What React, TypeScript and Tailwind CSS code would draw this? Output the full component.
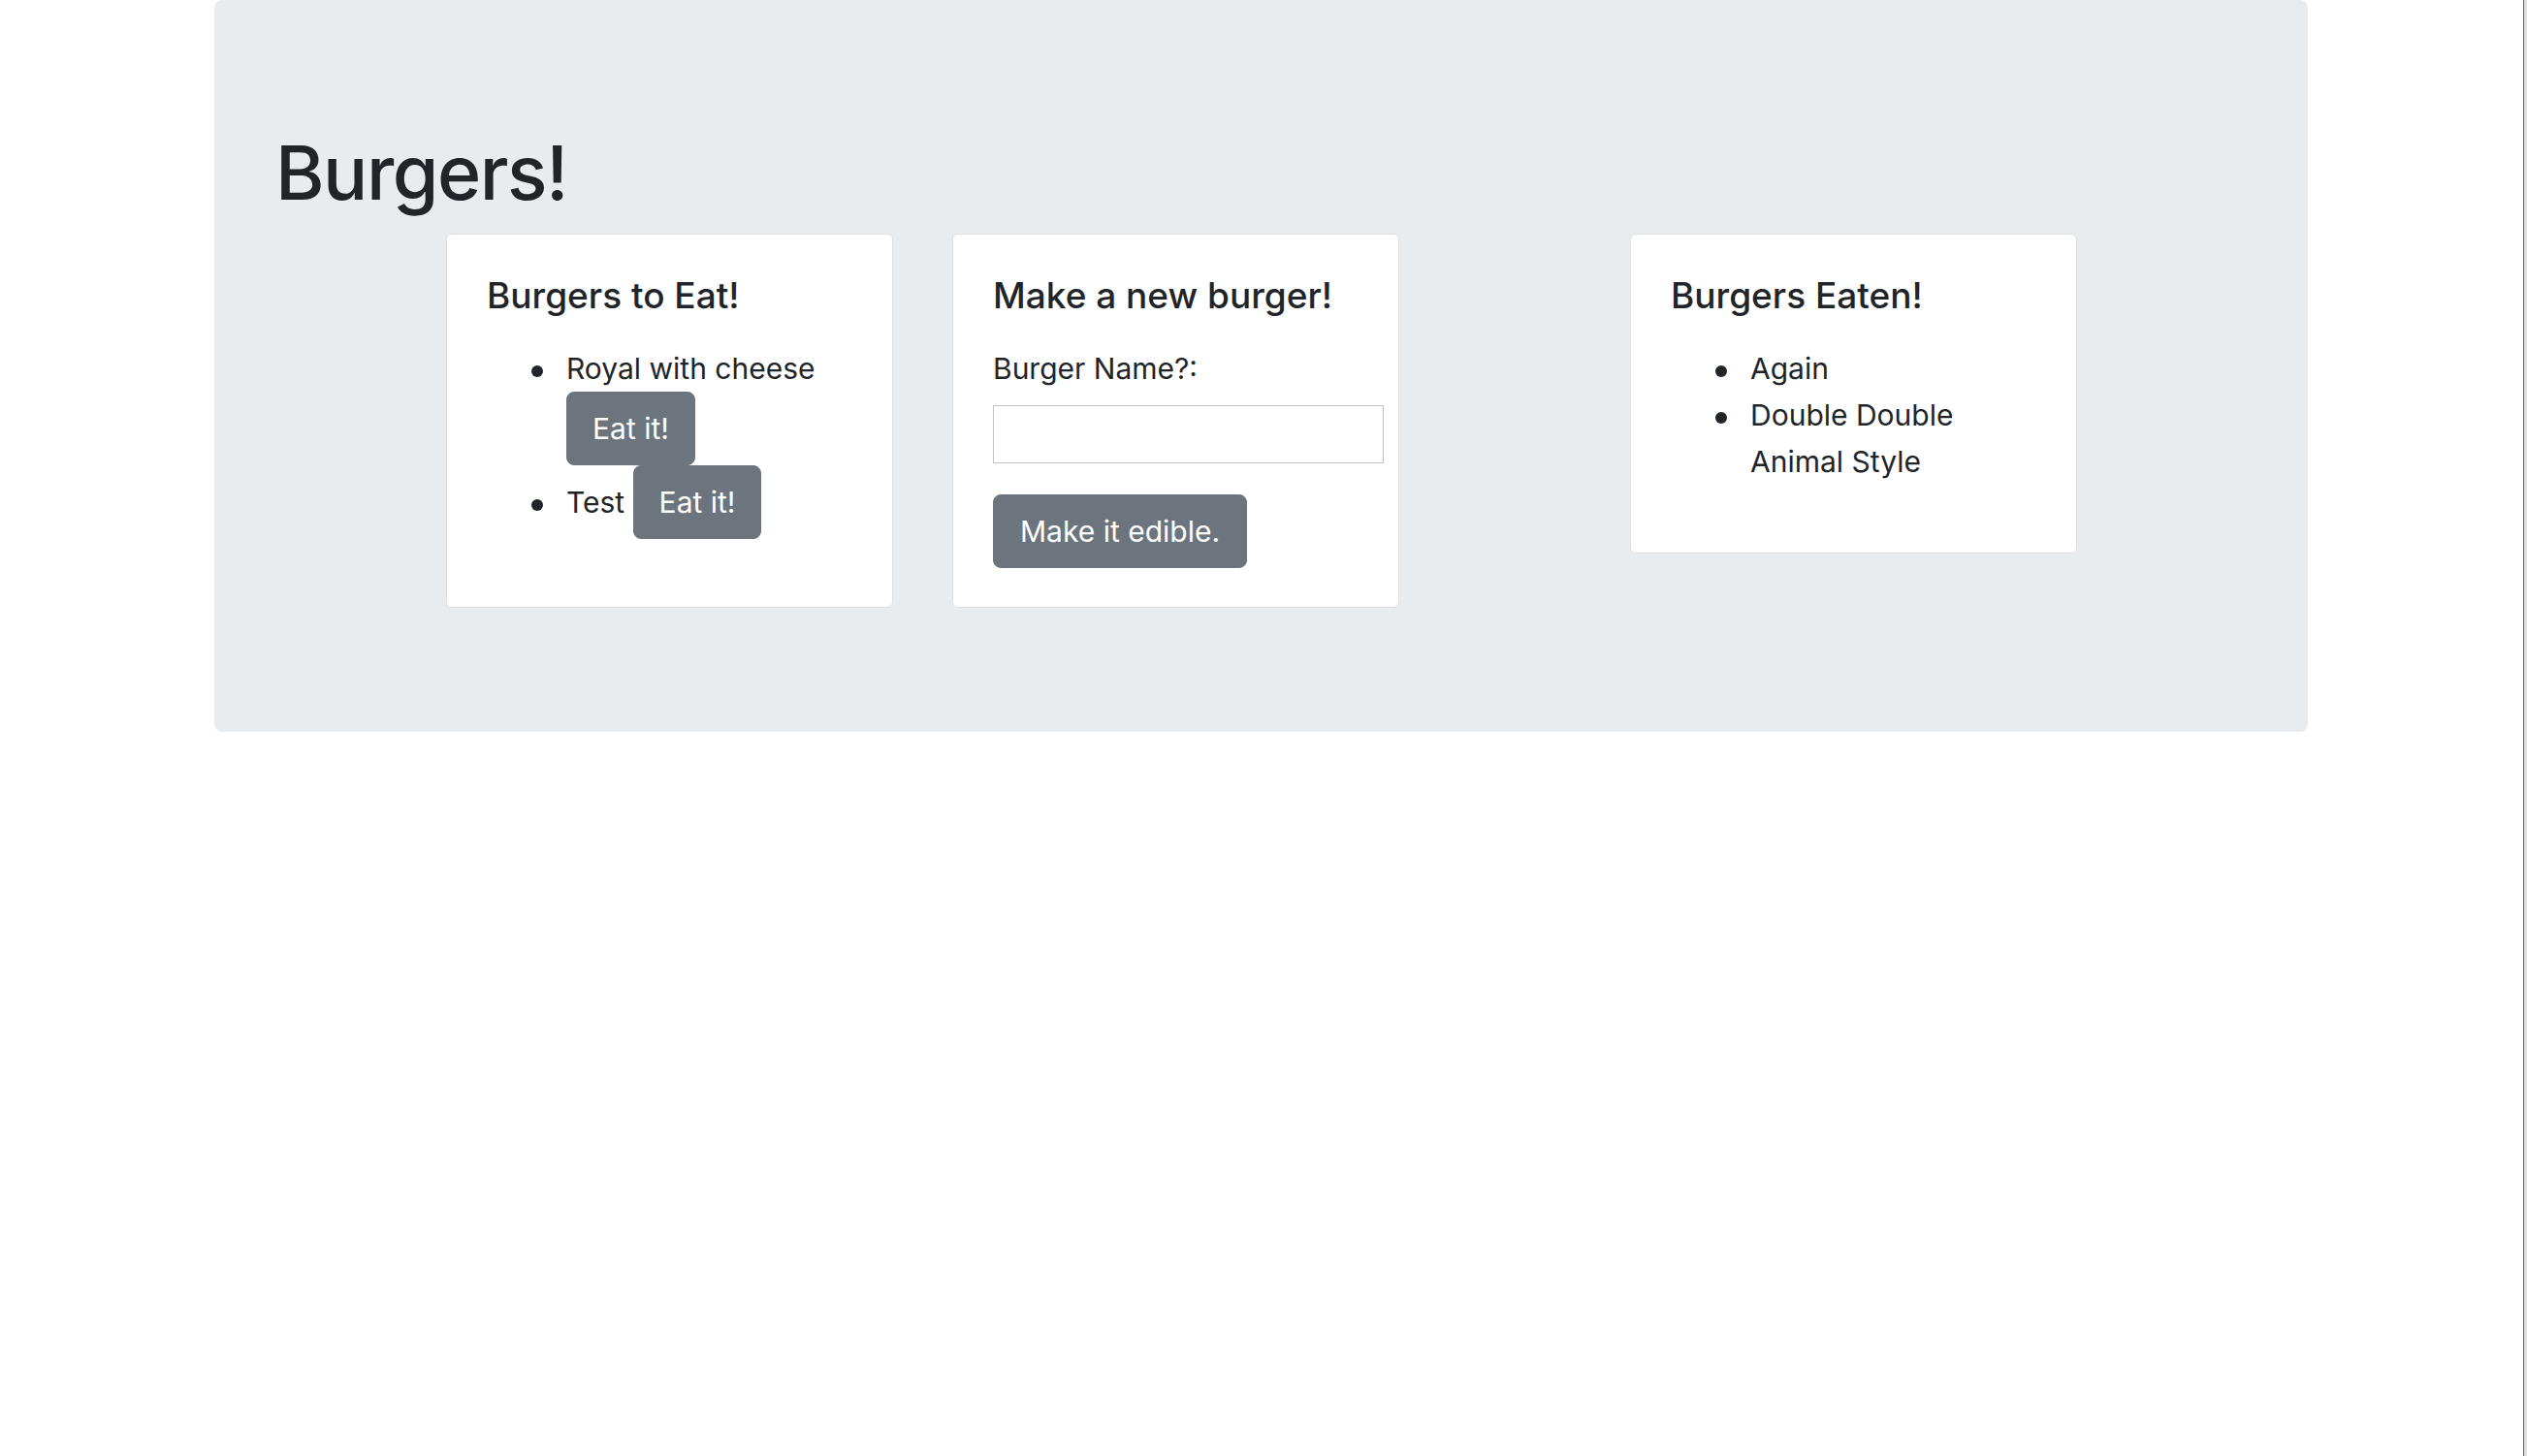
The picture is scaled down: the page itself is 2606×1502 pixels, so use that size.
import { useState } from 'react'

interface Burger {
  id: number
  name: string
  devoured: boolean
}

const initialBurgers: Burger[] = [
  { id: 1, name: 'Royal with cheese', devoured: false },
  { id: 2, name: 'Test', devoured: false },
  { id: 3, name: 'Again', devoured: true },
  { id: 4, name: 'Double Double Animal Style', devoured: true },
]

function Card({ title, children }: { title: string; children: React.ReactNode }) {
  return (
    <div className="w-[461px] shrink-0 bg-white border border-[#dfdfdf] rounded-[6px] px-[41px] pt-[40px] pb-[40px]">
      <h4 className="text-[37px] leading-[46px] font-medium mb-[28px]">{title}</h4>
      {children}
    </div>
  )
}

// disc bullet, kept in the text flow so it follows the first line's baseline
function Dot() {
  return <span className="inline-block w-[12px] h-[12px] rounded-full bg-[#212529] -ml-[36px] mr-[24px] align-[2px]" />
}

function App() {
  const [burgers, setBurgers] = useState<Burger[]>(initialBurgers)
  const [name, setName] = useState('')

  const devour = (id: number) => {
    setBurgers((prev) => prev.map((b) => (b.id === id ? { ...b, devoured: true } : b)))
  }

  const addBurger = (e: React.FormEvent) => {
    e.preventDefault()
    if (!name.trim()) return
    setBurgers((prev) => [...prev, { id: Date.now(), name: name.trim(), devoured: false }])
    setName('')
  }

  const toEat = burgers.filter((b) => !b.devoured)
  const eaten = burgers.filter((b) => b.devoured)

  return (
    <div className="flex w-full min-h-[1502px] bg-white text-[#212529] font-['Inter','Liberation_Sans',sans-serif]">
      <div className="flex-1">
        {/* jumbotron */}
        <div className="ml-[221px] w-[2159px] h-[755px] bg-[#e9ecef] rounded-[8px] pt-[138px]">
          <h1 className="pl-[63px] text-[77px] leading-[80px] font-medium tracking-[-1.5px]">Burgers!</h1>

          <div className="flex items-start mt-[23px] pl-[239px]">
            {/* burgers to eat */}
            <Card title="Burgers to Eat!">
              <ul className="list-none pl-[82px] mb-[30px] text-[30px] leading-[48px]">
                {toEat.map((b) => (
                  <li key={b.id}>
                    <Dot />
                    {b.name}{' '}
                    <button
                      className="inline-block align-baseline bg-[#6c757d] text-white border border-[#6c757d] rounded-[8px] px-[26px] py-[13px] text-[30px] leading-[48px]"
                      onClick={() => devour(b.id)}
                    >
                      Eat it!
                    </button>
                  </li>
                ))}
              </ul>
            </Card>

            {/* new burger form */}
            <div className="ml-[61px]">
              <Card title="Make a new burger!">
                <form onSubmit={addBurger}>
                  <label className="block text-[30px] leading-[48px]" htmlFor="burger-name">
                    Burger Name?:
                  </label>
                  <input
                    id="burger-name"
                    className="block mt-[14px] w-[403px] h-[60px] border border-[#c2c2c2] bg-white px-2 text-[28px] outline-none"
                    value={name}
                    onChange={(e) => setName(e.target.value)}
                  />
                  <button
                    type="submit"
                    className="mt-[32px] bg-[#6c757d] text-white border border-[#6c757d] rounded-[8px] px-[27px] py-[13px] text-[30px] leading-[48px]"
                  >
                    Make it edible.
                  </button>
                </form>
              </Card>
            </div>

            {/* eaten */}
            <div className="ml-[238px]">
              <Card title="Burgers Eaten!">
                <ul className="list-none pl-[82px] mb-[30px] text-[30px] leading-[48px]">
                  {eaten.map((b) => (
                    <li key={b.id}>
                      <Dot />
                      {b.name}
                    </li>
                  ))}
                </ul>
              </Card>
            </div>
          </div>
        </div>
      </div>

      {/* window edge */}
      <div className="w-[4px] border-l border-[#6b6b6b] bg-[#dedede]" />
    </div>
  )
}

export default App
